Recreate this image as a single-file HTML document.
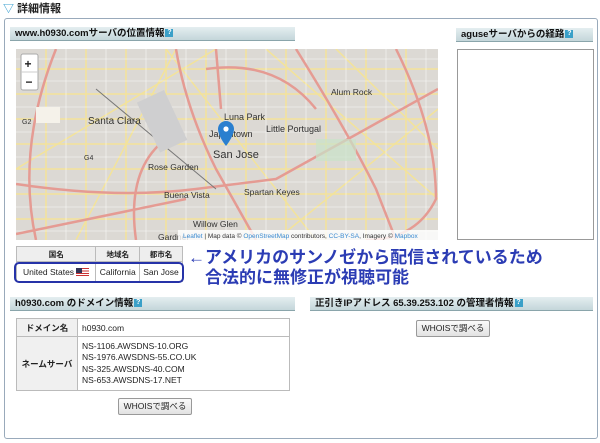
<!DOCTYPE html>
<html><head><meta charset="utf-8"><style>
*{margin:0;padding:0;box-sizing:border-box}
body{width:600px;height:443px;background:#fff;font-family:"Liberation Sans","Noto Sans CJK JP",sans-serif;position:relative;overflow:hidden;color:#222}
.a{position:absolute}
.hd{position:absolute;height:14px;background:linear-gradient(#e4eef0,#c4d6da);border-bottom:1px solid #8aa5ab;font-size:9.5px;font-weight:bold;line-height:14px;padding-left:5px;color:#111}
.q{display:inline-block;width:8px;height:8px;background:#3aa0c8;color:#fff;font-size:7px;line-height:8px;text-align:center;vertical-align:middle;margin-left:1px}
table{border-collapse:collapse;font-size:8.5px}
td,th{border:1px solid #bbb}
.btn{position:absolute;border:1px solid #999;border-radius:2px;background:linear-gradient(#fafafa,#e2e2e2);font-size:8.5px;text-align:center;line-height:15px;height:17px}
</style></head><body>
<div class="a" style="left:3px;top:2px;font-size:11px;font-weight:bold;line-height:14px"><span style="color:#3aa0d0">▽</span> 詳細情報</div>
<div class="a" style="left:4px;top:18px;width:594px;height:421px;border:1px solid #9ab;border-radius:3px"></div>
<div class="hd" style="left:10px;top:27px;width:285px">www.h0930.comサーバの位置情報<span class="q">?</span></div>
<div class="a" style="left:16px;top:49px;width:422px;height:191px;background:#dcd9d4;overflow:hidden">
<svg width="422" height="191" viewBox="0 0 422 191">
<g stroke="#f3e39a" stroke-width="1.5" fill="none">
<path d="M0 20H422M0 45H422M0 70H422M0 95H422M0 120H422M0 145H422M0 170H422"/>
<path d="M30 0V191M70 0V191M110 0V191M150 0V191M190 0V191M230 0V191M270 0V191M310 0V191M350 0V191M390 0V191"/>
<path d="M150 0L300 191M250 0L422 150M0 120L200 0M260 191L422 60M320 0L422 100M60 191L160 0"/>
</g>
<g stroke="#fff" stroke-width=".6" fill="none" opacity=".8">
<path d="M0 10H422M0 32H422M0 58H422M0 83H422M0 108H422M0 133H422M0 158H422M0 182H422"/>
<path d="M50 0V191M90 0V191M130 0V191M170 0V191M210 0V191M250 0V191M290 0V191M330 0V191M370 0V191M410 0V191"/>
</g>
<g stroke="#e59b93" stroke-width="2.5" fill="none">
<path d="M160 0Q170 60 200 120L240 191"/>
<path d="M0 135Q100 150 180 140L260 130L422 40"/>
<path d="M280 0Q330 80 360 140L380 191"/>
<path d="M40 0Q0 100 20 191"/>
<path d="M0 185L170 150"/>
<path d="M190 20Q260 10 300 60"/>
<path d="M380 0Q420 80 420 150Q400 191 350 191"/>
<path d="M120 191Q110 120 150 90"/>
<path d="M200 0L205 60"/>
</g>
<path d="M80 40L200 140" stroke="#777" stroke-width="1" fill="none"/>
<rect x="130" y="45" width="30" height="55" fill="#cfcfd0" transform="rotate(-25 145 70)"/>
<rect x="20" y="58" width="24" height="16" fill="#f5f2ea"/>
<rect x="300" y="90" width="40" height="22" fill="#c9e2c9" opacity=".7"/>
<g font-size="9" fill="#333" font-family="Liberation Sans,sans-serif">
<text x="72" y="75" font-size="10">Santa Clara</text>
<text x="208" y="71">Luna Park</text>
<text x="193" y="88">Japantown</text>
<text x="250" y="83">Little Portugal</text>
<text x="197" y="109" font-size="11">San Jose</text>
<text x="132" y="121" font-size="8.5">Rose Garden</text>
<text x="148" y="149" font-size="8.5">Buena Vista</text>
<text x="228" y="146" font-size="8.5">Spartan Keyes</text>
<text x="177" y="178" font-size="8.5">Willow Glen</text>
<text x="315" y="46" font-size="8.5">Alum Rock</text>
<text x="142" y="191" font-size="8.5">Gardner</text>
<text x="6" y="75" font-size="7">G2</text>
<text x="68" y="111" font-size="7">G4</text>
</g>
<path d="M210 72a8 8 0 0 1 8 8c0 7-8 17-8 17s-8-10-8-17a8 8 0 0 1 8-8z" fill="#2a7fcf"/>
<circle cx="210" cy="80" r="2.6" fill="#fff"/>
<rect x="5" y="5" width="17" height="36" rx="2" fill="#fff" stroke="#aaa"/>
<line x1="5" y1="23" x2="22" y2="23" stroke="#ccc"/>
<text x="8.5" y="19" font-size="12" font-weight="bold" fill="#222">+</text>
<text x="9.5" y="37" font-size="12" font-weight="bold" fill="#222">−</text>
<rect x="162" y="181" width="260" height="10" fill="#fff" opacity=".8"/>
<text x="167" y="189" font-size="6.5" fill="#333"><tspan fill="#3a8ad0">Leaflet</tspan> | Map data © <tspan fill="#3a8ad0">OpenStreetMap</tspan> contributors, <tspan fill="#3a8ad0">CC-BY-SA</tspan>, Imagery © <tspan fill="#3a8ad0">Mapbox</tspan></text>
</svg></div>
<div class="hd" style="left:456px;top:28px;width:137px">aguseサーバからの経路<span class="q">?</span></div>
<div class="a" style="left:457px;top:49px;width:137px;height:191px;border:1px solid #999;background:#fff"></div>
<div class="a" style="left:16px;top:246px">
<table style="width:167px;height:36px;text-align:center">
<tr style="background:#eee;height:15px"><th style="font-size:7.5px">国名</th><th style="font-size:7.5px">地域名</th><th style="font-size:7.5px">都市名</th></tr>
<tr><td>United States <span style="display:inline-block;width:13px;height:8px;background:repeating-linear-gradient(#c33 0 1.2px,#fff 1.2px 2.4px);position:relative;vertical-align:middle"><span style="position:absolute;left:0;top:0;width:6px;height:4.5px;background:#335"></span></span></td><td>California</td><td>San Jose</td></tr>
</table></div>
<div class="a" style="left:14px;top:262px;width:170px;height:21px;border:2px solid #2633a8;border-radius:5px"></div>
<div class="a" style="left:188px;top:248px;font-size:17px;font-weight:bold;color:#2b3cb4;line-height:20px;white-space:nowrap">←アメリカのサンノゼから配信されているため<br><span style="padding-left:17px">合法的に無修正が視聴可能</span></div>
<div class="hd" style="left:10px;top:297px;width:285px">h0930.com のドメイン情報<span class="q">?</span></div>
<div class="a" style="left:16px;top:318px">
<table style="width:274px">
<tr style="height:18px"><th style="width:61px;background:#f0f0f0">ドメイン名</th><td style="padding-left:4px">h0930.com</td></tr>
<tr style="height:54px"><th style="background:#f0f0f0">ネームサーバ</th><td style="padding-left:4px;line-height:11.5px">NS-1106.AWSDNS-10.ORG<br>NS-1976.AWSDNS-55.CO.UK<br>NS-325.AWSDNS-40.COM<br>NS-653.AWSDNS-17.NET</td></tr>
</table></div>
<div class="btn" style="left:118px;top:398px;width:74px">WHOISで調べる</div>
<div class="hd" style="left:310px;top:297px;width:283px">正引きIPアドレス 65.39.253.102 の管理者情報<span class="q">?</span></div>
<div class="btn" style="left:416px;top:320px;width:74px">WHOISで調べる</div>
</body></html>
